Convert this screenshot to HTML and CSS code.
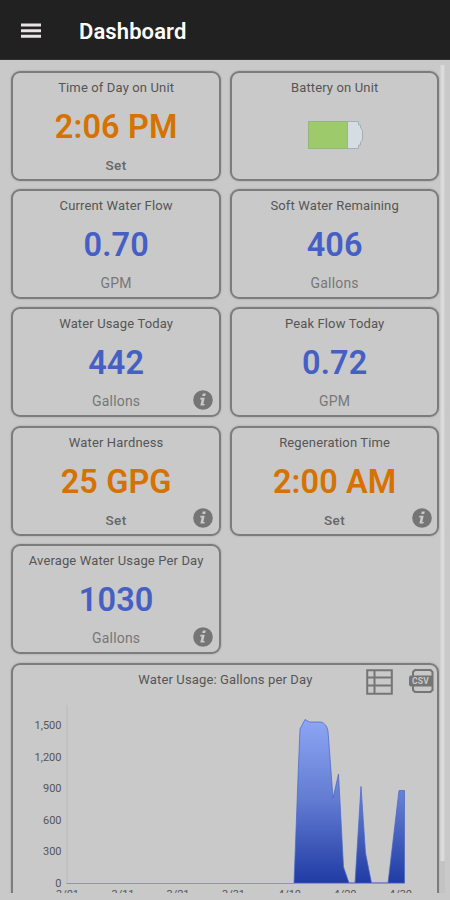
FILE: index.html
```html
<!DOCTYPE html>
<html lang="en">
<head>
<meta charset="utf-8">
<title>Dashboard</title>
<link rel="stylesheet" href="styles.css">
</head>
<body>
<svg width="0" height="0" class="defs">
  <symbol id="info" viewBox="0 0 20 20"><circle cx="10" cy="10" r="9.8" fill="#757575"/><path d="M9.8 3.6h3l-.6 2.5h-3zM7.5 7.7h4.2L10.3 14h1.5l-.4 1.6H7.3l1.4-6.2H7.1z" fill="#c9c9c9"/></symbol>
</svg>
<header class="bar">
  <svg class="menu" width="20" height="16" viewBox="0 0 20 16"><path d="M0 2h20M0 7.7h20M0 13.3h20" stroke="#e9e3e6" stroke-width="2.9"/></svg>
  <h1>Dashboard</h1>
</header>
<main class="view">
  <div class="content">
    <section class="grid">
      <article class="card"><h2>Time of Day on Unit</h2><p class="value orange">2:06 PM</p><p class="unit set">Set</p></article>
      <article class="card"><h2>Battery on Unit</h2>
        <svg class="battery" width="56" height="28" viewBox="0 0 56 28"><path d="M.5.5h50v3.500h2v3q2 1 2 3v8q0 2-2 3v3h-2v3.500H.5z" fill="#d5dde3" stroke="#a5b0b5"/><path d="M.5.5h39v27H.5z" fill="#9dca6b" stroke="#92b276" stroke-width=".8"/></svg>
      </article>
      <article class="card"><h2>Current Water Flow</h2><p class="value">0.70</p><p class="unit">GPM</p></article>
      <article class="card"><h2>Soft Water Remaining</h2><p class="value">406</p><p class="unit">Gallons</p></article>
      <article class="card"><h2>Water Usage Today</h2><p class="value">442</p><p class="unit">Gallons</p><svg class="info"><use href="#info"/></svg></article>
      <article class="card"><h2>Peak Flow Today</h2><p class="value">0.72</p><p class="unit">GPM</p></article>
      <article class="card"><h2>Water Hardness</h2><p class="value orange">25 GPG</p><p class="unit set">Set</p><svg class="info"><use href="#info"/></svg></article>
      <article class="card"><h2>Regeneration Time</h2><p class="value orange">2:00 AM</p><p class="unit set">Set</p><svg class="info"><use href="#info"/></svg></article>
      <article class="card"><h2>Average Water Usage Per Day</h2><p class="value">1030</p><p class="unit">Gallons</p><svg class="info"><use href="#info"/></svg></article>
    </section>
    <section class="chart">
      <div class="chart-head">
        <h2>Water Usage: Gallons per Day</h2>
        <div class="tools">
          <svg width="27" height="26" viewBox="0 0 27 26" fill="none" stroke="#757575" stroke-width="2"><path d="M1.200 1.200h24.600v23.600H1.200zM1 8.500h25M1 16.500h25M8.500 1v24"/></svg>
          <svg width="25" height="24" viewBox="0 0 25 24"><path d="M4 7V3l2-2h15.500l2 2v18l-2 2H6l-2-2v-4" fill="none" stroke="#757575" stroke-width="2"/><rect x="0" y="6.500" width="24" height="11" rx="2" fill="#757575"/><text x="11.500" y="15.300" class="csv">CSV</text></svg>
        </div>
      </div>
      <svg class="plot" width="424" height="220" viewBox="13.500 695 424 220">
        <defs><linearGradient id="area" gradientUnits="userSpaceOnUse" x1="0" y1="719" x2="0" y2="883"><stop offset="0" stop-color="#8ea6f3"/><stop offset=".5" stop-color="#617bd2"/><stop offset="1" stop-color="#203ba3"/></linearGradient></defs>
        <path d="M67.500 705v178" stroke="#bababf"/>
        <path d="M294.500 883L299 765L300.500 729L305.500 719.500L310 722H321.500Q327 723.500 328.500 731L333.500 798L339 774L344 867L349.500 883H355.500L361.500 786.500L366 853L372 883H388.500L399.500 790.500H405V883z" fill="url(#area)" stroke="#4963c4" stroke-width=".7"/>
        <path d="M67 883.500h338" stroke="#8f90c4"/>
        <g class="y"><text x="62" y="729">1,500</text><text x="62" y="760.500">1,200</text><text x="62" y="792">900</text><text x="62" y="823.500">600</text><text x="62" y="855">300</text><text x="62" y="887">0</text></g>
        <g class="x"><text x="68" y="898">3/01</text><text x="123.500" y="898">3/11</text><text x="178.500" y="898">3/21</text><text x="234" y="898">3/31</text><text x="290" y="898">4/10</text><text x="345.500" y="898">4/20</text><text x="401" y="898">4/30</text></g>
      </svg>
    </section>
  </div>
  <div class="scroll"><div class="thumb"></div></div>
</main>
</body>
</html>
```
FILE: styles.css
```css
* { box-sizing: border-box; }
body { margin: 0; width: 450px; height: 900px; overflow: hidden; background: #c9c9c9; font-family: Roboto, sans-serif; color: #555; }
h1, h2, p { margin: 0; }
.defs { display: none; }
.bar { height: 60px; padding: 2px 0 0 21px; display: flex; align-items: center; background: #212121; border-bottom: 1px solid #303030; }
.bar h1 { margin-left: 38px; padding-top: 1px; font-size: 22px; font-weight: 600; letter-spacing: .1px; color: #fff; }
.view { display: flex; height: 833px; overflow: hidden; }
.content { width: 429px; margin-left: 11.4px; padding-top: 10.600px; flex: none; }
.grid { display: grid; grid-template-columns: 209.500px 209.500px; grid-auto-rows: 110px; gap: 8.400px 9px; }
.card { position: relative; border: 2px solid #7c7c7c; border-radius: 9px; display: flex; flex-direction: column; align-items: center; padding-top: 6px; box-shadow: 0 0 2px #999; }
h2 { font-size: 13px; line-height: 18px; font-weight: 400; letter-spacing: .14px; white-space: nowrap; }
.value { margin-top: 10px; font-size: 32.500px; line-height: 40px; font-weight: 600; letter-spacing: .1px; color: #465fc5; }
.orange { color: #d57200; }
.unit { margin-top: 9px; font-size: 14px; line-height: 18px; letter-spacing: .2px; color: #777; }
.unit.set { font-size: 13.500px; font-weight: 500; letter-spacing: .5px; color: #666; }
.battery { margin: 24px 0 0 2px; }
.info { position: absolute; right: 5.500px; bottom: 5.500px; width: 20px; height: 20px; }
.chart { margin-top: 8.500px; width: 428px; height: 270px; border: 2px solid #7c7c7c; border-radius: 9px; box-shadow: 0 0 2px #999; }
.chart-head { position: relative; height: 30px; padding-top: 6px; text-align: center; }
.tools { position: absolute; right: 3px; top: 4px; display: flex; gap: 16px; }
.csv { font-size: 8.500px; font-weight: 700; text-anchor: middle; fill: #c9c9c9; letter-spacing: .3px; }
.plot { display: block; }
.plot text { font-size: 11px; fill: #555; }
.y { text-anchor: end; }
.x { text-anchor: middle; }
.scroll { width: 5px; margin-top: 5px; background: #c3c3c3; }
.thumb { height: 796px; background: linear-gradient(90deg, #cfcfcf, #dedede 50%, #cfcfcf); }
```
